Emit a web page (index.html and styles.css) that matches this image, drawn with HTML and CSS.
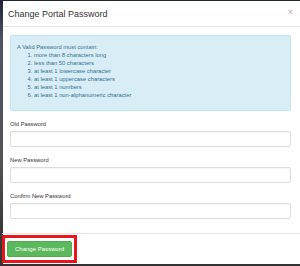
FILE: index.html
```html
<!DOCTYPE HTML>
<html>
  <head>
    <meta charset="utf-8">
    <title>Change Portal Password</title>
    <link rel="stylesheet" href="styles.css">
  </head>
  <body>
    <div class="modal">
      <div class="modal-header">
        <h4 class="modal-title">Change Portal Password</h4>
        <button class="close">&times;</button>
      </div>
      <div class="modal-body">
        <div class="alert">
          A Valid Password must contain:
          <ol>
            <li>more than 8 characters long</li>
            <li>less than 50 characters</li>
            <li>at least 1 lowercase character</li>
            <li>at least 1 uppercase characters</li>
            <li>at least 1 numbers</li>
            <li>at least 1 non-alphanumeric character</li>
          </ol>
        </div>
        <label>Old Password</label>
        <input type="password">
        <label>New Password</label>
        <input type="password">
        <label>Confirm New Password</label>
        <input type="password">
      </div>
      <div class="modal-footer">
        <span class="highlight"><button class="btn">Change Password</button></span>
      </div>
    </div>
  </body>
</html>
```

FILE: styles.css
```css
* { box-sizing: border-box; }
html, body {
  height: 266px;
  overflow: hidden;
}
body {
  margin: 0;
  padding: 1px 0 0 3px;
  background: linear-gradient(#1f2538 0, #4e5462 15%, #555 60%, #3a3a3a 85%, #333 100%);
  font-family: "Liberation Sans", Arial, sans-serif;
}
.modal {
  background: #fff;
  height: 263px;
}
.modal-header {
  height: 26px;
  display: flex;
  align-items: center;
  justify-content: space-between;
  padding: 0 7px 0 5px;
  border-bottom: 1px solid #e5e5e5;
}
.modal-title {
  margin: 0;
  font-size: 9px;
  font-weight: normal;
  color: #333;
}
.close {
  border: none;
  background: none;
  padding: 0;
  font-size: 9px;
  font-weight: bold;
  line-height: 1;
  color: #000;
  opacity: .25;
  margin-top: -2px;
}
.modal-body { padding: 8px 9px 14px 7px; }
.alert {
  background: #d9edf7;
  border: 1px solid #bce8f1;
  border-radius: 2px;
  color: #31708f;
  font-size: 5.8px;
  line-height: 8px;
  padding: 7px 6px 11px;
}
.alert ol {
  margin: 0;
  padding-left: 17px;
}
label {
  display: block;
  font-size: 5.8px;
  line-height: 8px;
  color: #333;
  margin: 9px 0 3px;
}
input {
  display: block;
  width: 100%;
  height: 16px;
  margin: 0;
  border: 1px solid #ddd;
  border-radius: 2px;
  box-shadow: inset 0 1px 1px rgba(0, 0, 0, .04);
}
.modal-footer {
  display: flex;
  border-top: 1px solid #e5e5e5;
  padding-top: 1px;
  margin-left: -1px;
}
.highlight {
  display: inline-flex;
  border: 3px solid #e8151b;
  padding: 3px 2px 3px 2px;
}
.btn {
  width: 65px;
  height: 16px;
  padding: 0;
  background: #5cb85c;
  border: 1px solid #4cae4c;
  border-radius: 2px;
  color: #fff;
  font-family: "Liberation Sans", Arial, sans-serif;
  font-size: 6px;
}
```
